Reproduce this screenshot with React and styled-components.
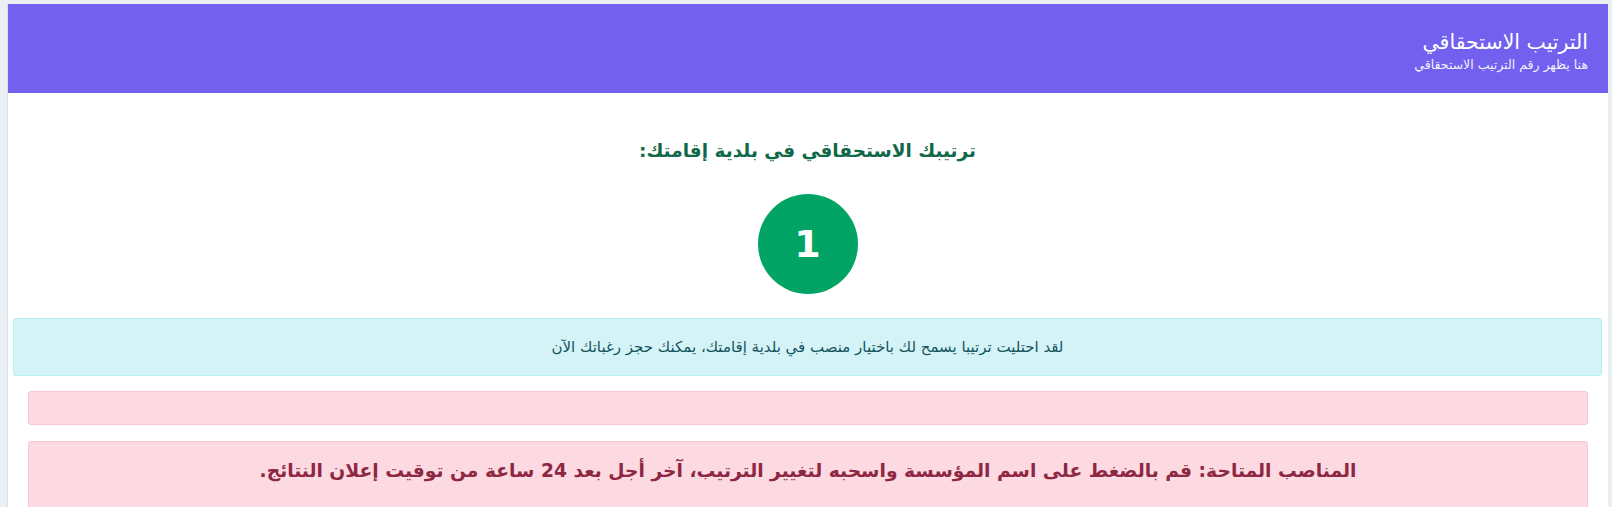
import React from "react"
import styled, { createGlobalStyle } from "styled-components"

const GlobalStyle = createGlobalStyle`
    html, body {
        margin: 0;
        padding: 0;
        background: #e9eff3;
        font-family: "DejaVu Sans", "Noto Sans", sans-serif;
    }
`

const Page = styled.div`
    padding: 4px 4px 0 7px;
    height: 507px;
    box-sizing: border-box;
    overflow: hidden;
`

const Card = styled.div`
    background: #fff;
    direction: rtl;
    border-left: 1px solid #d9e2e8;
    min-height: 540px;
`

const Header = styled.div`
    background: #7360ee;
    color: #fff;
    height: 89px;
    box-sizing: border-box;
    padding: 24px 20px 0 20px;
    display: flex;
    flex-direction: column;
    align-items: flex-start;
`

const Title = styled.h3`
    margin: 0;
    font-size: 20.5px;
    font-weight: normal;
    line-height: 28px;
`

const Subtitle = styled.p`
    margin: 0;
    font-size: 12.5px;
    line-height: 18px;
    opacity: 0.92;
`

const Body = styled.div`
    padding: 0 6px 0 5px;
    display: flex;
    flex-direction: column;
    align-items: center;
`

const RankTitle = styled.h4`
    margin: 40px 0 0;
    font-size: 18.5px;
    font-weight: bold;
    color: #0f6848;
    line-height: 36px;
`

const Circle = styled.div`
    width: 100px;
    height: 100px;
    border-radius: 50%;
    background: #02a466;
    color: #fff;
    display: flex;
    align-items: center;
    justify-content: center;
    font-size: 38px;
    font-weight: bold;
    margin-top: 25px;
`

const Alert = styled.div`
    align-self: stretch;
    box-sizing: border-box;
    border-radius: 3px;
    text-align: center;
    background: ${(p) => (p.kind === "info" ? "#d4f3f7" : "#fdd9e1")};
    border: 1px solid ${(p) => (p.kind === "info" ? "#b9ecf3" : "#f9c3cf")};
    color: ${(p) => (p.kind === "info" ? "#14545e" : "#8e2743")};
    margin: ${(p) => p.m};
    height: ${(p) => p.h}px;
    padding-top: ${(p) => p.pt || 0}px;
    font-size: ${(p) => p.fs || 14}px;
    line-height: 28px;
    font-weight: ${(p) => (p.bold ? "bold" : "normal")};
`

export default function App() {
    return (
        <>
            <GlobalStyle />
            <Page>
                <Card>
                    <Header>
                        <Title>الترتيب الاستحقاقي</Title>
                        <Subtitle>هنا يظهر رقم الترتيب الاستحقاقي</Subtitle>
                    </Header>
                    <Body>
                        <RankTitle>ترتيبك الاستحقاقي في بلدية إقامتك:</RankTitle>
                        <Circle>1</Circle>
                        <Alert kind="info" m="24px 0 0" h={58} pt={14} fs={15}>
                            لقد احتليت ترتيبا يسمح لك باختيار منصب في بلدية إقامتك، يمكنك حجز رغباتك الآن
                        </Alert>
                        <Alert kind="danger" m="15px 14px 0 15px" h={34} />
                        <Alert kind="danger" m="16px 14px 0 15px" h={80} pt={15} fs={18.7} bold>
                            المناصب المتاحة: قم بالضغط على اسم المؤسسة واسحبه لتغيير الترتيب، آخر أجل بعد 24 ساعة من توقيت إعلان النتائج.
                        </Alert>
                    </Body>
                </Card>
            </Page>
        </>
    )
}
